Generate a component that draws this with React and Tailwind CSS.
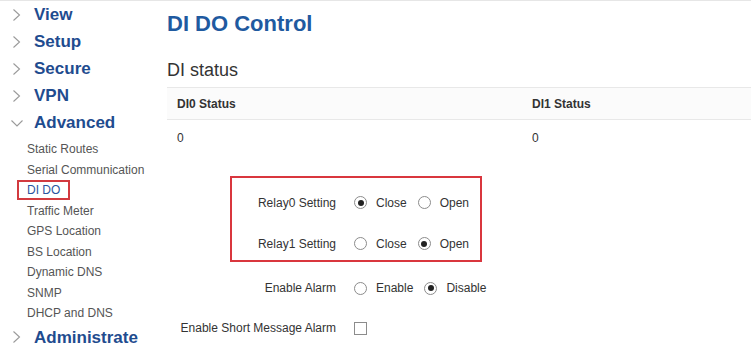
import React from 'react';

const topItems = ['View', 'Setup', 'Secure', 'VPN'];
const subItems = [
  'Static Routes',
  'Serial Communication',
  'DI DO',
  'Traffic Meter',
  'GPS Location',
  'BS Location',
  'Dynamic DNS',
  'SNMP',
  'DHCP and DNS',
];

function Chevron({ down }) {
  return down ? (
    <svg className="w-[14px] h-[10px]" viewBox="0 0 14 10" fill="none" stroke="#9a9a9a" strokeWidth="1.1">
      <polyline points="1.5,2.5 7,8 12.5,2.5" />
    </svg>
  ) : (
    <svg className="w-[14px] h-[14px]" viewBox="0 0 14 14" fill="none" stroke="#9a9a9a" strokeWidth="1.1">
      <polyline points="3.5,1.5 9.5,7 3.5,12.5" />
    </svg>
  );
}

function NavGroup({ label, open }) {
  return (
    <div className="h-[27px] flex items-center">
      <div className="w-[34px] pl-[10px] flex items-center">
        <Chevron down={open} />
      </div>
      <span className="text-[17px] font-bold text-[#1f4c8f] leading-none">{label}</span>
    </div>
  );
}

function Radio({ checked }) {
  return (
    <span className="w-[13px] h-[13px] rounded-full border border-[#8c8c8c] bg-white flex items-center justify-center">
      {checked && <span className="w-[6px] h-[6px] rounded-full bg-[#222]" />}
    </span>
  );
}

function RadioPair({ a, b, value }) {
  return (
    <div className="flex items-center text-[12px] text-[#333]">
      <Radio checked={value === a} />
      <span className="ml-[9px] mr-[11px]">{a}</span>
      <Radio checked={value === b} />
      <span className="ml-[9px]">{b}</span>
    </div>
  );
}

function FormRow({ label, labelWidth, className = 'h-[40px]', children }) {
  return (
    <div className={'flex items-center ' + className}>
      <div className="text-right text-[12px] text-[#333] shrink-0" style={{ width: labelWidth }}>
        {label}
      </div>
      <div className="ml-[18px]">{children}</div>
    </div>
  );
}

export default function App() {
  return (
    <div
      className="w-[751px] h-[347px] overflow-hidden bg-white border-t border-[#e6e6e6] flex"
      style={{ fontFamily: '"Liberation Sans", Arial, sans-serif' }}
    >
      {/* sidebar */}
      <aside className="w-[167px] shrink-0">
        {topItems.map((t) => (
          <NavGroup key={t} label={t} />
        ))}
        <NavGroup label="Advanced" open />
        <div className="pt-[3px]">
          {subItems.map((s) => (
            <div key={s} className="h-[20.5px] flex items-center pl-[17px]">
              {s === 'DI DO' ? (
                <span className="border-2 border-[#d23a3f] px-[8px] h-[20px] flex items-center text-[12px] text-[#2a55a0]">
                  {s}
                </span>
              ) : (
                <span className="pl-[10px] text-[12px] text-[#555]">{s}</span>
              )}
            </div>
          ))}
        </div>
        <NavGroup label="Administrate" />
      </aside>

      {/* main */}
      <main className="flex-1 min-w-0">
        <h1 className="h-[45px] flex items-center text-[22px] font-bold text-[#1f5aa0] leading-none">
          DI DO Control
        </h1>
        <h2 className="mt-[11px] h-[26px] flex items-center text-[18px] text-[#333] leading-none">DI status</h2>

        <div className="mt-[4px] grid grid-cols-[355px_1fr] text-[12px] text-[#333]">
          <div className="h-[33px] flex items-center pl-[10px] font-bold bg-[#fbfbfb] border-y border-[#e8e8e8]">
            DI0 Status
          </div>
          <div className="h-[33px] flex items-center pl-[10px] font-bold bg-[#fbfbfb] border-y border-[#e8e8e8]">
            DI1 Status
          </div>
          <div className="h-[36px] flex items-center pl-[10px]">0</div>
          <div className="h-[36px] flex items-center pl-[10px]">0</div>
        </div>

        <div className="mt-[20px] ml-[63px] w-[252px] border-2 border-[#d9363e] pt-[4px]">
          <FormRow label="Relay0 Setting" labelWidth="104px" className="h-[41px]">
            <RadioPair a="Close" b="Open" value="Close" />
          </FormRow>
          <FormRow label="Relay1 Setting" labelWidth="104px" className="h-[37px] pt-[4px]">
            <RadioPair a="Close" b="Open" value="Open" />
          </FormRow>
        </div>

        <div className="mt-[6px]">
          <FormRow label="Enable Alarm" labelWidth="169px">
            <RadioPair a="Enable" b="Disable" value="Disable" />
          </FormRow>
          <FormRow label="Enable Short Message Alarm" labelWidth="169px">
            <span className="block w-[13px] h-[13px] border border-[#8c8c8c] bg-white" />
          </FormRow>
        </div>
      </main>
    </div>
  );
}
